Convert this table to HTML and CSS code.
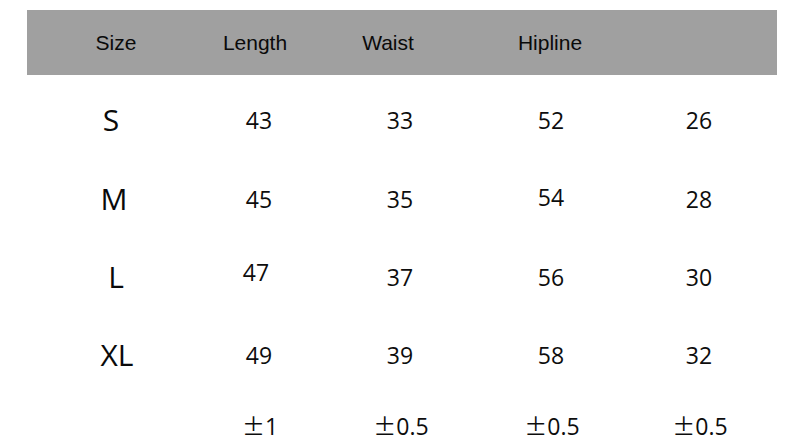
FILE: index.html
```html
<!DOCTYPE html>
<html lang="en">
<head>
<meta charset="utf-8">
<title>Size chart</title>
<link rel="stylesheet" href="styles.css">
</head>
<body>
<main class="chart">
  <div class="head">
    <div class="hcell">Size</div>
    <div class="hcell">Length</div>
    <div class="hcell">Waist</div>
    <div class="hcell">Hipline</div>
    <div class="hcell"></div>
  </div>
  <div class="grid">
    <div class="size size-s">S</div><div class="num">43</div><div class="num">33</div><div class="num">52</div><div class="num">26</div>
    <div class="size size-m">M</div><div class="num">45</div><div class="num">35</div><div class="num up">54</div><div class="num">28</div>
    <div class="size size-l">L</div><div class="num up2">47</div><div class="num">37</div><div class="num">56</div><div class="num">30</div>
    <div class="size size-xl">XL</div><div class="num">49</div><div class="num">39</div><div class="num">58</div><div class="num">32</div>
    <div class="size"></div><div class="num tol"><span class="pm">±</span>1</div><div class="num tol"><span class="pm">±</span>0.5</div><div class="num tol"><span class="pm">±</span>0.5</div><div class="num tol"><span class="pm">±</span>0.5</div>
  </div>
</main>
</body>
</html>
```

FILE: styles.css
```css
html, body {
  margin: 0;
  padding: 0;
  background: #ffffff;
}

.chart {
  width: 800px;
  height: 448px;
  padding: 10px 0 0 27px;
  box-sizing: border-box;
  overflow: hidden;
}

.head {
  width: 750px;
  height: 65px;
  background: #a0a0a0;
  display: grid;
  grid-template-columns: 178px 100px 166px 158px 142px;
  align-items: center;
}

.hcell {
  font-family: "Liberation Sans", Arial, sans-serif;
  font-size: 21px;
  line-height: 24px;
  color: #0a0a0a;
  text-align: center;
}

.grid {
  margin-top: 5px;
  display: grid;
  grid-template-columns: 176px 112px 170px 132px 164px;
  grid-template-rows: 80px 78px 78px 78px 62px;
  align-items: center;
}

.size {
  font-family: "Open Sans", "Noto Sans", sans-serif;
  font-size: 30px;
  font-weight: 500;
  line-height: 40px;
  color: #0a0a0a;
  text-align: center;
}

.size-s { padding-right: 8px; }
.size-m { padding-right: 2px; }
.size-l { padding-left: 2px; }
.size-xl { padding-left: 4px; }

.num {
  font-family: "Open Sans", "Noto Sans", sans-serif;
  font-size: 23px;
  font-weight: 500;
  line-height: 30px;
  color: #0d0d0d;
  text-align: center;
}

.up { margin-bottom: 4px; }
.up2 { margin-bottom: 10px; padding-right: 6px; }

.tol {
  padding-left: 2px;
}

.pm {
  font-family: "Noto Sans CJK SC", "Open Sans", sans-serif;
  font-weight: 400;
}
```
